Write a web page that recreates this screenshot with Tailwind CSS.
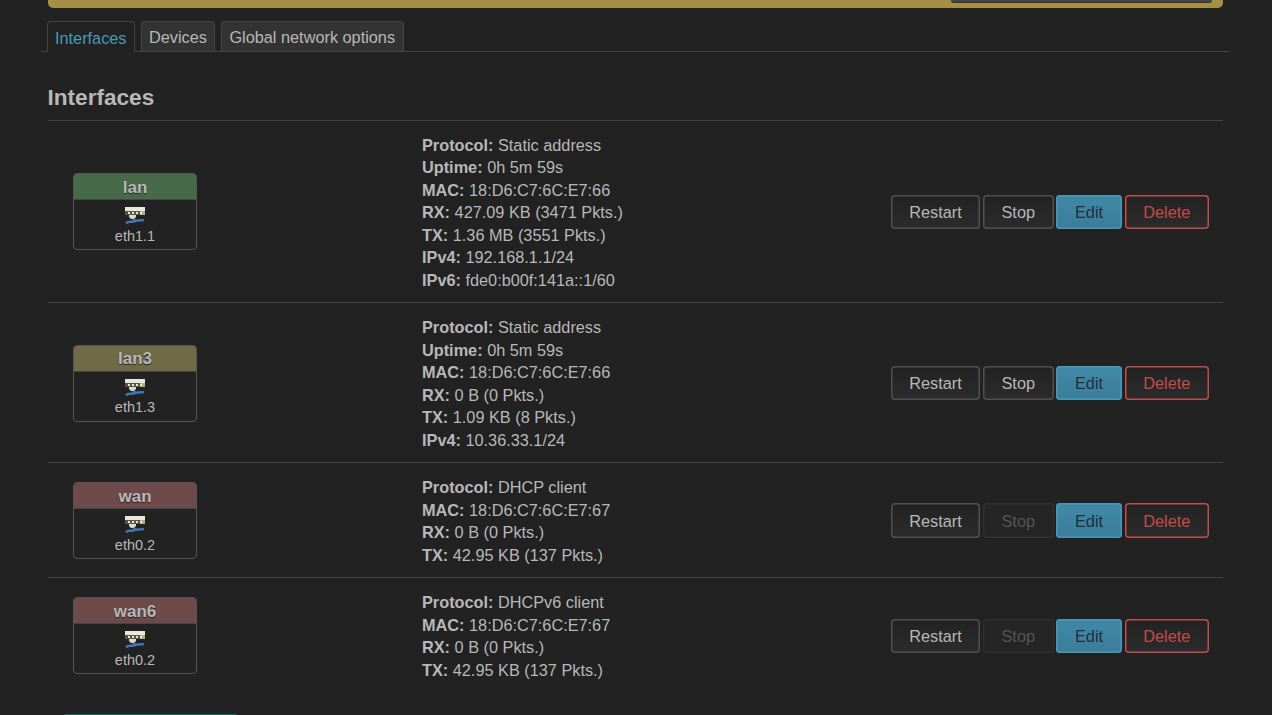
<!DOCTYPE html>
<html lang="en">
<head>
    <meta charset="UTF-8">
    <meta name="viewport" content="width=device-width, initial-scale=1.0">
    <title>Interfaces</title>
    <script src="https://cdn.jsdelivr.net/npm/@tailwindcss/browser@4"></script>
</head>
<body class="bg-[#222222] h-[715px] overflow-hidden font-['Liberation_Sans',Arial,sans-serif] text-[16.3px] leading-[22.5px] text-[#b8b8b8]">
    <div class="w-[1175px] ml-[47.5px]">
        <!-- banner, scrolled off the top -->
        <div class="h-[8px] bg-[#a58e45] rounded-b-[5px] flex justify-end pr-[10.5px] overflow-hidden">
            <div class="w-[261px] h-[3px] bg-[#444444] border-b border-[#333333] rounded-b-[3px]"></div>
        </div>

        <!-- tabs -->
        <ul class="flex -mx-[6.5px] px-[5.5px] mt-[13px] h-[31px] border-b border-[#444444] gap-[5.5px] items-end">
            <li class="h-[31px] -mb-px px-[7.5px] pt-[5px] bg-[#222222] border border-b-0 border-[#444444] rounded-t-[4px] text-[#479bb8]">Interfaces</li>
            <li class="h-[30px] px-[7.5px] pt-[4px] bg-[#333333] border border-b-0 border-[#444444] rounded-t-[4px]">Devices</li>
            <li class="h-[30px] px-[7.5px] pt-[4px] bg-[#333333] border border-b-0 border-[#444444] rounded-t-[4px]">Global network options</li>
        </ul>

        <h2 class="mt-[31px] h-[38px] text-[22.6px] leading-[30px] font-bold border-b border-[#444444]">Interfaces</h2>

        <!-- lan -->
        <div class="flex items-center h-[182px] border-b border-[#444444]">
            <div class="w-[374.5px] pl-[25.5px]">
                <div class="w-[124px] h-[77px] bg-[#222222] border border-[#555555] rounded-[4px] overflow-hidden text-center">
                    <div class="h-[26px] pt-px bg-[#476b48] border-b border-[#444444] text-[17px] font-bold leading-[25px] [text-shadow:0_1px_1px_#222222]">lan</div>
                    <svg class="mx-auto mt-[7px] block" width="20" height="18" viewBox="0 0 20 18"><rect width="20" height="4" fill="#e8e8e0"/><rect y="4" width="20" height="4" fill="#55554a"/><rect x="15" y="4" width="5" height="4" fill="#b5b07a"/><path d="M3 6h2M7 6h2M11 6h2M15 6h2" stroke="#e8e8c8" stroke-width="2"/><path d="M4 8h7v2l-2 2h-3l-2-2z" fill="#d8d8d0"/><path d="M1 16.500c2-3 4-1 7-2l2-2.500M8 14.500c3-1 6-1 11-1.500" fill="none" stroke="#3f74b5" stroke-width="2.500"/></svg>
                    <div class="text-[14.5px] leading-[20px] mt-[1px]">eth1.1</div>
                </div>
            </div>
            <div class="flex-1 pt-[2px]">
                <div><b>Protocol:</b> Static address</div>
                <div><b>Uptime:</b> 0h 5m 59s</div>
                <div><b>MAC:</b> 18:D6:C7:6C:E7:66</div>
                <div><b>RX:</b> 427.09 KB (3471 Pkts.)</div>
                <div><b>TX:</b> 1.36 MB (3551 Pkts.)</div>
                <div><b>IPv4:</b> 192.168.1.1/24</div>
                <div><b>IPv6:</b> fde0:b00f:141a::1/60</div>
            </div>
            <div class="flex pr-[13.500px] pt-[1px] text-center">
                <button class="w-[89px] h-[34.600px] pt-[1px] rounded-[4px] shadow-[inset_0_0_0_1.5px_#505050] bg-gradient-to-b from-[#222222] to-[#2c2c2c] text-[#b8b8b8]">Restart</button>
                <button class="ml-[3px] w-[70.500px] h-[34.600px] pt-[1px] rounded-[4px] shadow-[inset_0_0_0_1.5px_#505050] bg-gradient-to-b from-[#222222] to-[#2c2c2c] text-[#b8b8b8]">Stop</button>
                <button class="ml-[2.500px] w-[66px] h-[34.600px] pt-[1px] rounded-[4px] shadow-[inset_0_0_0_1.5px_#4a97b5] bg-gradient-to-b from-[#4189a9] to-[#3b7d99] text-[#222f38]">Edit</button>
                <button class="ml-[2.500px] w-[84.500px] h-[34.600px] pt-[1px] rounded-[4px] shadow-[inset_0_0_0_1.5px_#c04c4c] bg-gradient-to-b from-[#222222] to-[#2c2c2c] text-[#c44c4c]">Delete</button>
            </div>
        </div>

        <!-- lan3 -->
        <div class="flex items-center h-[160px] border-b border-[#444444]">
            <div class="w-[374.5px] pl-[25.5px] pt-[2px]">
                <div class="w-[124px] h-[77px] bg-[#222222] border border-[#555555] rounded-[4px] overflow-hidden text-center">
                    <div class="h-[26px] bg-[#6f6b47] border-b border-[#444444] text-[17px] font-bold leading-[25px] [text-shadow:0_1px_1px_#222222]">lan3</div>
                    <svg class="mx-auto mt-[7px] block" width="20" height="18" viewBox="0 0 20 18"><rect width="20" height="4" fill="#e8e8e0"/><rect y="4" width="20" height="4" fill="#55554a"/><rect x="15" y="4" width="5" height="4" fill="#b5b07a"/><path d="M3 6h2M7 6h2M11 6h2M15 6h2" stroke="#e8e8c8" stroke-width="2"/><path d="M4 8h7v2l-2 2h-3l-2-2z" fill="#d8d8d0"/><path d="M1 16.500c2-3 4-1 7-2l2-2.500M8 14.500c3-1 6-1 11-1.500" fill="none" stroke="#3f74b5" stroke-width="2.500"/></svg>
                    <div class="text-[14.5px] leading-[20px]">eth1.3</div>
                </div>
            </div>
            <div class="flex-1 pt-[2px]">
                <div><b>Protocol:</b> Static address</div>
                <div><b>Uptime:</b> 0h 5m 59s</div>
                <div><b>MAC:</b> 18:D6:C7:6C:E7:66</div>
                <div><b>RX:</b> 0 B (0 Pkts.)</div>
                <div><b>TX:</b> 1.09 KB (8 Pkts.)</div>
                <div><b>IPv4:</b> 10.36.33.1/24</div>
            </div>
            <div class="flex pr-[13.500px] pt-[1px] text-center">
                <button class="w-[89px] h-[34.600px] pt-[1px] rounded-[4px] shadow-[inset_0_0_0_1.5px_#505050] bg-gradient-to-b from-[#222222] to-[#2c2c2c] text-[#b8b8b8]">Restart</button>
                <button class="ml-[3px] w-[70.500px] h-[34.600px] pt-[1px] rounded-[4px] shadow-[inset_0_0_0_1.5px_#505050] bg-gradient-to-b from-[#222222] to-[#2c2c2c] text-[#b8b8b8]">Stop</button>
                <button class="ml-[2.500px] w-[66px] h-[34.600px] pt-[1px] rounded-[4px] shadow-[inset_0_0_0_1.5px_#4a97b5] bg-gradient-to-b from-[#4189a9] to-[#3b7d99] text-[#222f38]">Edit</button>
                <button class="ml-[2.500px] w-[84.500px] h-[34.600px] pt-[1px] rounded-[4px] shadow-[inset_0_0_0_1.5px_#c04c4c] bg-gradient-to-b from-[#222222] to-[#2c2c2c] text-[#c44c4c]">Delete</button>
            </div>
        </div>

        <!-- wan -->
        <div class="flex items-center h-[115px] border-b border-[#444444]">
            <div class="w-[374.5px] pl-[25.5px]">
                <div class="w-[124px] h-[77px] bg-[#222222] border border-[#555555] rounded-[4px] overflow-hidden text-center">
                    <div class="h-[26px] pt-px bg-[#6f4a4a] border-b border-[#444444] text-[17px] font-bold leading-[25px] [text-shadow:0_1px_1px_#222222]">wan</div>
                    <svg class="mx-auto mt-[7px] block" width="20" height="18" viewBox="0 0 20 18"><rect width="20" height="4" fill="#e8e8e0"/><rect y="4" width="20" height="4" fill="#55554a"/><rect x="15" y="4" width="5" height="4" fill="#b5b07a"/><path d="M3 6h2M7 6h2M11 6h2M15 6h2" stroke="#e8e8c8" stroke-width="2"/><path d="M4 8h7v2l-2 2h-3l-2-2z" fill="#d8d8d0"/><path d="M1 16.500c2-3 4-1 7-2l2-2.500M8 14.500c3-1 6-1 11-1.500" fill="none" stroke="#3f74b5" stroke-width="2.500"/></svg>
                    <div class="text-[14.5px] leading-[20px] mt-[1px]">eth0.2</div>
                </div>
            </div>
            <div class="flex-1 pt-[2px]">
                <div><b>Protocol:</b> DHCP client</div>
                <div><b>MAC:</b> 18:D6:C7:6C:E7:67</div>
                <div><b>RX:</b> 0 B (0 Pkts.)</div>
                <div><b>TX:</b> 42.95 KB (137 Pkts.)</div>
            </div>
            <div class="flex pr-[13.500px] pt-[1px] text-center">
                <button class="w-[89px] h-[34.600px] pt-[1px] rounded-[4px] shadow-[inset_0_0_0_1.5px_#505050] bg-gradient-to-b from-[#222222] to-[#2c2c2c] text-[#b8b8b8]">Restart</button>
                <button class="ml-[3px] w-[70.500px] h-[34.600px] pt-[1px] rounded-[4px] shadow-[inset_0_0_0_1.5px_#303030] bg-[#252525] text-[#555555]">Stop</button>
                <button class="ml-[2.500px] w-[66px] h-[34.600px] pt-[1px] rounded-[4px] shadow-[inset_0_0_0_1.5px_#4a97b5] bg-gradient-to-b from-[#4189a9] to-[#3b7d99] text-[#222f38]">Edit</button>
                <button class="ml-[2.500px] w-[84.500px] h-[34.600px] pt-[1px] rounded-[4px] shadow-[inset_0_0_0_1.5px_#c04c4c] bg-gradient-to-b from-[#222222] to-[#2c2c2c] text-[#c44c4c]">Delete</button>
            </div>
        </div>

        <!-- wan6 -->
        <div class="flex items-center h-[115px]">
            <div class="w-[374.5px] pl-[25.5px]">
                <div class="w-[124px] h-[77px] bg-[#222222] border border-[#555555] rounded-[4px] overflow-hidden text-center">
                    <div class="h-[26px] pt-px bg-[#6f4a4a] border-b border-[#444444] text-[17px] font-bold leading-[25px] [text-shadow:0_1px_1px_#222222]">wan6</div>
                    <svg class="mx-auto mt-[7px] block" width="20" height="18" viewBox="0 0 20 18"><rect width="20" height="4" fill="#e8e8e0"/><rect y="4" width="20" height="4" fill="#55554a"/><rect x="15" y="4" width="5" height="4" fill="#b5b07a"/><path d="M3 6h2M7 6h2M11 6h2M15 6h2" stroke="#e8e8c8" stroke-width="2"/><path d="M4 8h7v2l-2 2h-3l-2-2z" fill="#d8d8d0"/><path d="M1 16.500c2-3 4-1 7-2l2-2.500M8 14.500c3-1 6-1 11-1.500" fill="none" stroke="#3f74b5" stroke-width="2.500"/></svg>
                    <div class="text-[14.5px] leading-[20px] mt-[1px]">eth0.2</div>
                </div>
            </div>
            <div class="flex-1 pt-[1px]">
                <div><b>Protocol:</b> DHCPv6 client</div>
                <div><b>MAC:</b> 18:D6:C7:6C:E7:67</div>
                <div><b>RX:</b> 0 B (0 Pkts.)</div>
                <div><b>TX:</b> 42.95 KB (137 Pkts.)</div>
            </div>
            <div class="flex pr-[13.500px] pt-[1px] text-center">
                <button class="w-[89px] h-[34.600px] pt-[1px] rounded-[4px] shadow-[inset_0_0_0_1.5px_#505050] bg-gradient-to-b from-[#222222] to-[#2c2c2c] text-[#b8b8b8]">Restart</button>
                <button class="ml-[3px] w-[70.500px] h-[34.600px] pt-[1px] rounded-[4px] shadow-[inset_0_0_0_1.5px_#303030] bg-[#252525] text-[#555555]">Stop</button>
                <button class="ml-[2.500px] w-[66px] h-[34.600px] pt-[1px] rounded-[4px] shadow-[inset_0_0_0_1.5px_#4a97b5] bg-gradient-to-b from-[#4189a9] to-[#3b7d99] text-[#222f38]">Edit</button>
                <button class="ml-[2.500px] w-[84.500px] h-[34.600px] pt-[1px] rounded-[4px] shadow-[inset_0_0_0_1.5px_#c04c4c] bg-gradient-to-b from-[#222222] to-[#2c2c2c] text-[#c44c4c]">Delete</button>
            </div>
        </div>

        <!-- next button, cut off by the window -->
        <div class="mt-[21px] ml-[15.5px] w-[175px] h-[4px] bg-[#1a6b55] rounded-t-[3px]"></div>
    </div>
</body>
</html>
